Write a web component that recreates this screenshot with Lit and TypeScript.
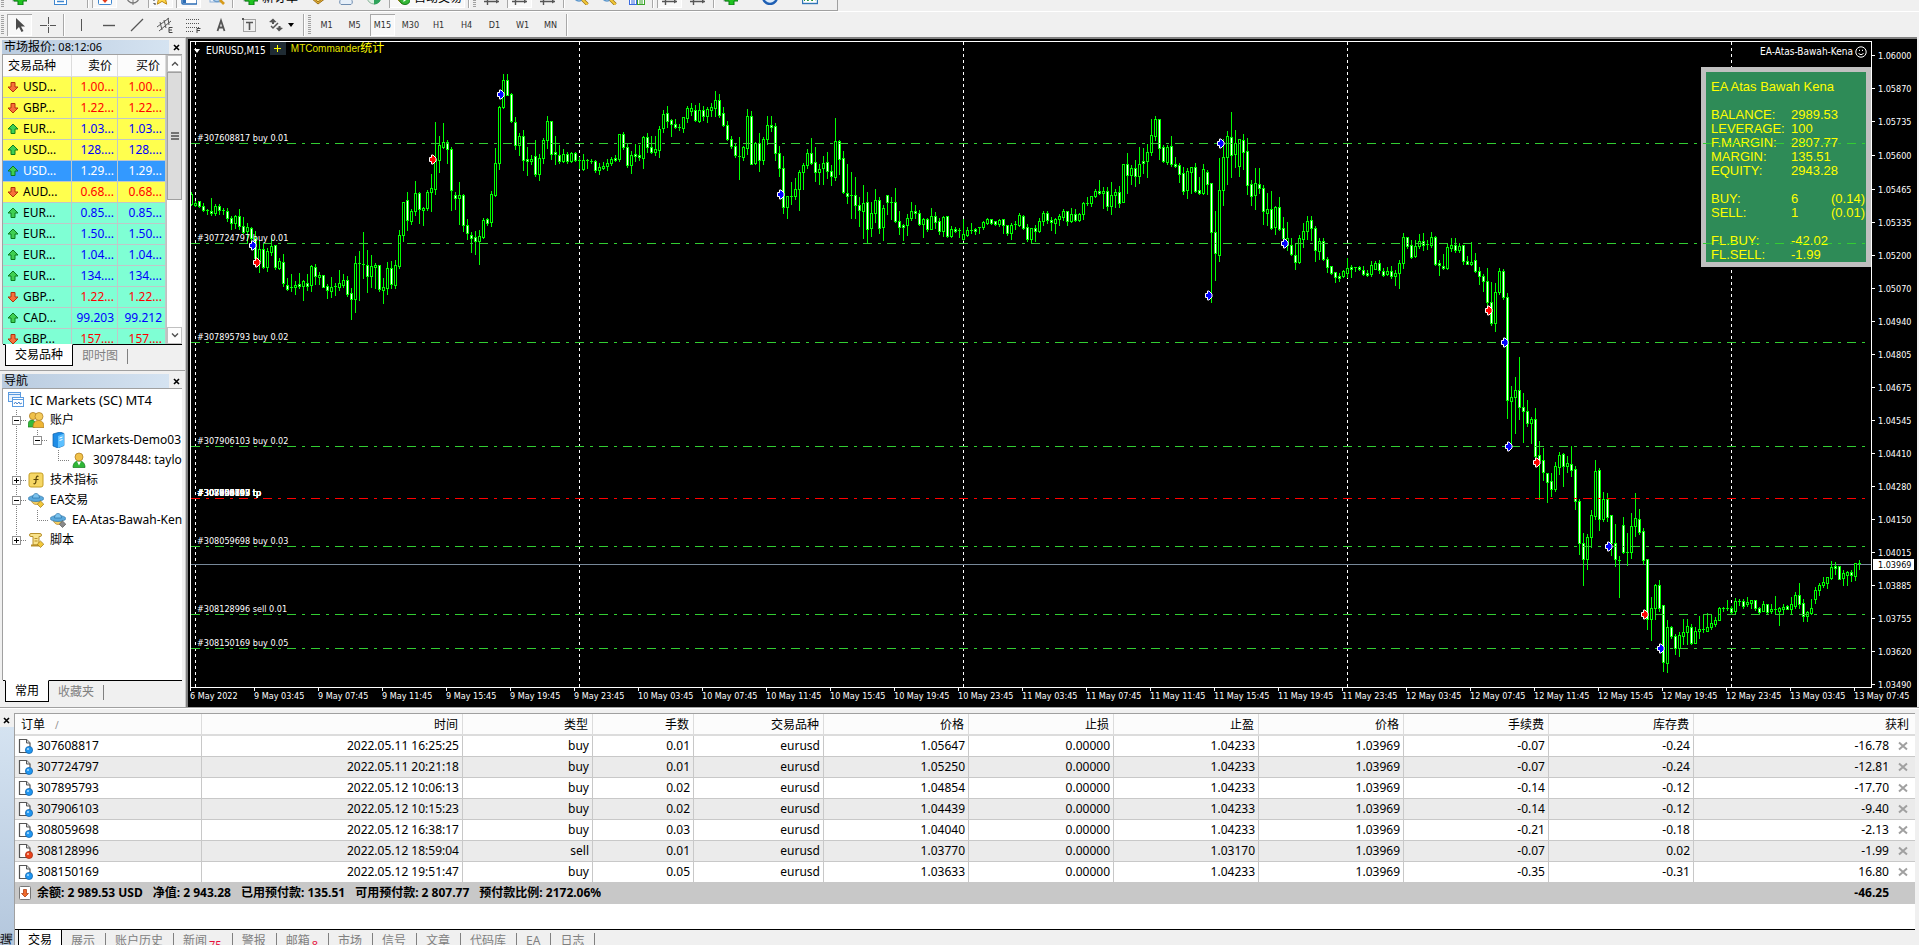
import { LitElement, html, css, svg, nothing } from "lit";
import { customElement, property } from "lit/decorators.js";
import { classMap } from "lit/directives/class-map.js";

/* ---------- icons ---------- */

const ICONS: Record<string, unknown> = {
  plus: svg`<rect x="2" y="1" width="9" height="11" fill="#fff" stroke="#9aa"/><path d="M7 4h5v4h4v4h-4v4H7v-4H3V8h4z" fill="#1fc41f" stroke="#0b7a12"/>`,
  windows: svg`<rect x="1.500" y="1.500" width="11" height="9" fill="#dceafb" stroke="#3f87d0"/><rect x="3.500" y="5.500" width="12" height="10" fill="#fff" stroke="#3f87d0"/><path d="M4 7h11M6 10h7M6 12.500h7" stroke="#3f87d0" stroke-width="1.500"/>`,
  heart: svg`<rect x="1.500" y="0.500" width="13" height="15" rx="1" fill="#fff" stroke="#3f87d0"/><path d="M8 14L4 9.500 6 8l2 1 2-1 2 1.500z" fill="#e23b1c"/>`,
  target: svg`<circle cx="8" cy="8" r="6" fill="none" stroke="#777" stroke-width="1.300"/><path d="M8 0v16M0 8h16" stroke="#777"/>`,
  star: svg`<path d="M1 2v13M1 15h3" stroke="#333" stroke-dasharray="2 2"/><path d="M9 1l2.200 5 5 .5-3.700 3.400 1.200 5.300L9 12.400l-4.700 2.800 1.200-5.300L2 6.500 7 6z" fill="#ffd84a" stroke="#c08a12"/>`,
  pane: svg`<rect x="1" y="1" width="15" height="14" rx="1" fill="#fff" stroke="#2b6cb5" stroke-width="1.500"/><path d="M2 2h3v12H2z" fill="#2b6cb5"/>`,
  lens: svg`<rect x="1" y="1" width="11" height="12" fill="#eef4fb" stroke="#8db1da"/><circle cx="8" cy="8" r="4.500" fill="#d6e9fb" stroke="#6c9dcc" stroke-width="1.400"/><path d="M11 11l4 4" stroke="#d69b1c" stroke-width="2.600"/>`,
  zoom: svg`<circle cx="6" cy="7" r="5" fill="#d6e9fb" stroke="#5d97cc" stroke-width="1.600"/><path d="M9.500 10.500l5 5" stroke="#9a7414" stroke-width="3.400"/><path d="M9.500 10.500l5 5" stroke="#f2c83a" stroke-width="2"/>`,
  book: svg`<path d="M1 9l7 6 8-6-8-7z" fill="#e9b43a" stroke="#9a6d14"/><path d="M1 7l7 6 8-6" fill="#f8d870" stroke="#9a6d14"/>`,
  cloud: svg`<circle cx="8" cy="5" r="4" fill="#d7e6f7" stroke="#7c96b4"/><path d="M3 15.500a3 3 0 010-5 5 5 0 0110 0 3 3 0 010 5z" fill="#e6eff9" stroke="#6f8db0"/>`,
  radar: svg`<circle cx="8" cy="8" r="7" fill="#dff0e4" stroke="#8bb59a"/><path d="M8 8v7.500A7 7 0 0015 8z" fill="#2fa35a"/><path d="M8 8v-6a6 6 0 00-5 9z" fill="#9ccbe8"/>`,
  auto: svg`<path d="M1 8l7 7 8-5-6-8z" fill="#f0c440" stroke="#a17a12"/><circle cx="11" cy="10" r="5.500" fill="#35b838" stroke="#14791b"/><path d="M9.500 7v6l4-3z" fill="#fff"/>`,
  bars: svg`<path d="M3.500 2v14M0 12.500h15" stroke="#555" stroke-width="1.400"/><path d="M3.500 0L1.500 3h4zM15 12.500l-3-2v4z" fill="#555"/><path d="M9.500 3v6" stroke="#149a1c" stroke-width="2"/>`,
  step: svg`<path d="M3.500 2v14M0 12.500h15" stroke="#555" stroke-width="1.400"/><path d="M15 12.500l-3-2v4z" fill="#555"/><path d="M9.500 2v8" stroke="#2b6cb5" stroke-width="1.600"/>`,
  tiles: svg`<rect x="0.500" y="1.500" width="7" height="6" fill="#cfe5ff" stroke="#3a7bd0"/><rect x="8.500" y="1.500" width="7" height="6" fill="#d9f5cf" stroke="#3ba52a"/><rect x="0.500" y="9.500" width="7" height="6" fill="#fff" stroke="#3a6be0"/><rect x="8.500" y="9.500" width="7" height="6" fill="#fff" stroke="#3ba52a"/><path d="M2 12h4M2 14h4" stroke="#3a6be0"/><path d="M10 12h4M10 14h4" stroke="#3ba52a"/>`,
  clock: svg`<circle cx="8" cy="8" r="7" fill="#dcebfa" stroke="#1e5fb4" stroke-width="2.400"/><path d="M8 3v5l3 2" stroke="#333" fill="none"/>`,
  frame: svg`<rect x="0.500" y="1.500" width="15" height="13" fill="#fff" stroke="#2f76b8" stroke-width="1.400"/><path d="M2 12l2-2 2 2 2-3 2 3 2-2 2 1" stroke="#2a9a3b" fill="none"/>`,
  cursor: svg`<path d="M4 1v12l3-3 2.500 5 2-1L9 9.500h4z" fill="#4a4a4a"/>`,
  cross: svg`<path d="M8.500 0v7M8.500 10v6M0 8.500h7M10 8.500h6M8 8.500h1" stroke="#555"/>`,
  vline: svg`<path d="M8.500 2v12" stroke="#555"/>`,
  hline: svg`<path d="M2 8.500h12" stroke="#555" stroke-width="1.400"/>`,
  trend: svg`<path d="M2 14L14 2" stroke="#555" stroke-width="1.200"/>`,
  channel: svg`<path d="M0 10L12 1M2 14L14 4M3 5l2 8M7 3l2 8M11 1l1 7" stroke="#555" fill="none"/><path d="M15.500 10.500h-3.500v5h3.500M12 13h3" stroke="#444" fill="none"/>`,
  fib: svg`<path d="M1 2.500h14M1 6.500h14M1 10.500h14M1 14.500h8" stroke="#555" stroke-dasharray="1 1"/><path d="M15.500 11.500h-3.500V16M12 13.500h3" stroke="#444" fill="none"/>`,
  textA: svg`<path d="M4.500 14L8 3.500 11.500 14M5.500 10.500h5" stroke="#555" stroke-width="1.800" fill="none"/>`,
  textT: svg`<rect x="2.500" y="2.500" width="12" height="12" fill="none" stroke="#555" stroke-dasharray="1 1"/><path d="M5 5.500h7M8.500 5.500V13" stroke="#555" stroke-width="1.600"/><rect x="1" y="1" width="2" height="2" fill="#555"/>`,
  arrows: svg`<path d="M1 5l4-3.500L8.500 5 6 5.500V7H4V5.500z" fill="#555"/><path d="M8 11l3 3.500L15 11l-2.500-.5V9h-2v1.500z" fill="#555"/><path d="M3 9l2 2 5-5" stroke="#555" stroke-width="1.500" fill="none"/>`,
  up: svg`<path d="M6 1l5 5H8v4.500H4V6H1z" fill="#3fcf52" stroke="#0c7a1e"/>`,
  down: svg`<path d="M6 11L1 6h3V1.500h4V6h3z" fill="#f7703a" stroke="#b2300c"/>`,
  terminal: svg`<rect x="0.500" y="0.500" width="12" height="9" fill="#e9f2fc" stroke="#5b9be0"/><path d="M1 2.500h11" stroke="#5b9be0"/><rect x="4.500" y="5.500" width="11" height="9" fill="#fff" stroke="#5b9be0"/><path d="M5 7.500h10" stroke="#5b9be0"/><path d="M6 12l1.500-2 1.500 2 2-2 1 2 2-1" stroke="#4a86cf" fill="none"/>`,
  people: svg`<path d="M0 15c0-5 1-7 4-7s3 2 3 7z" fill="#35b93a" stroke="#187a1e" stroke-width=".7"/><circle cx="5" cy="4" r="3.600" fill="#f0c14a" stroke="#a8761a" stroke-width=".7"/><path d="M5 15.500c0-5 2-7 5.500-7s5.500 2 5.500 7z" fill="#eeb534" stroke="#a8761a" stroke-width=".7"/><circle cx="11" cy="4.500" r="4" fill="#f4cb5c" stroke="#a8761a" stroke-width=".7"/>`,
  server: svg`<path d="M3 2l7-2 4 1.500v12L8 16l-5-2z" fill="#1f8de6" stroke="#0d5ea8" stroke-width=".7"/><path d="M8 4l6-2.500v12L8 16z" fill="#5cc0ff"/><path d="M9.500 6l3-1M9.500 8.500l3-1" stroke="#fff"/>`,
  person: svg`<path d="M2 15.500c0-4 2-6.500 6-6.500s6 2.500 6 6.500z" fill="#2fb637" stroke="#167a1d" stroke-width=".7"/><path d="M6 9.500l2 4 2-4z" fill="#fff"/><circle cx="8" cy="5" r="4" fill="#f0c14a" stroke="#a8761a" stroke-width=".7"/>`,
  fx: svg`<rect x="1" y="1" width="14" height="14" rx="2" fill="#f6d765" stroke="#c59d22"/><path d="M10.500 4.500c-2-1-2.500 1-2.500 3.500s-.5 4.500-2.500 3.500M5.500 7.500h5" stroke="#5a4408" stroke-width="1.200" fill="none"/>`,
  expert: svg`<path d="M3 8c1 3 3 4.500 5 4.500s4-1.500 5-4.500z" fill="#f2cd62" stroke="#a8761a" stroke-width=".6"/><ellipse cx="8" cy="6.500" rx="7.800" ry="3" fill="#5aa9dd" stroke="#2d74a8" stroke-width=".7"/><path d="M4.500 6c0-6 7-6 7 0z" fill="#7cc3ee" stroke="#2d74a8" stroke-width=".7"/><path d="M12.500 9l3.300 3.200-3.300 3.300-3.200-3.300z" fill="#f2c83a" stroke="#9a7414" stroke-width=".7"/>`,
  expertOff: svg`<path d="M3 8c1 3 3 4.500 5 4.500s4-1.500 5-4.500z" fill="#f2cd62" stroke="#a8761a" stroke-width=".6"/><ellipse cx="8" cy="6.500" rx="7.800" ry="3" fill="#5aa9dd" stroke="#2d74a8" stroke-width=".7"/><path d="M4.500 6c0-6 7-6 7 0z" fill="#7cc3ee" stroke="#2d74a8" stroke-width=".7"/><path d="M12.500 9l3.300 3.200-3.300 3.300-3.200-3.300z" fill="#8a8a8a" stroke="#555" stroke-width=".7"/>`,
  script: svg`<path d="M3 1.500h9a1.500 1.500 0 010 3h-1V13h-6V4.500H3a1.500 1.500 0 010-3z" fill="#f8e28a" stroke="#b8902a"/><path d="M3 13.500h8" stroke="#b8902a" stroke-width="2"/><path d="M6.500 6.500h3M6.500 9h3" stroke="#b8902a"/><path d="M12.500 9l3.300 3.200-3.300 3.300-3.200-3.300z" fill="#f2c83a" stroke="#9a7414" stroke-width=".7"/>`,
  docBuy: svg`<path d="M1.500 1.500h7l3.500 3.500v9.500h-10.500z" fill="#fff" stroke="#555" stroke-width="1.200"/><path d="M8.500 1.500V5H12" fill="#ddd" stroke="#555"/><circle cx="11" cy="12" r="3.600" fill="#2196f0" stroke="#0c5fa8" stroke-width=".7"/><circle cx="10" cy="11" r="1.100" fill="#a9dcff"/>`,
  docSell: svg`<path d="M1.500 1.500h7l3.500 3.500v9.500h-10.500z" fill="#fff" stroke="#555" stroke-width="1.200"/><path d="M8.500 1.500V5H12" fill="#ddd" stroke="#555"/><circle cx="11" cy="12" r="3.600" fill="#e8431c" stroke="#a52608" stroke-width=".7"/><circle cx="10" cy="11" r="1.100" fill="#ffc0a8"/>`,
  balance: svg`<rect x="1.500" y="1.500" width="11" height="13" rx="1" fill="#fff" stroke="#777"/><path d="M7 12L3.500 8.500h2V4.500h3v4h2z" fill="#f06a2a" stroke="#a53208" stroke-width=".7"/>`,
};

const icon = (name: string, size = 16, box = 16) =>
  html`<svg class="icon" width=${size} height=${size} viewBox="0 0 ${box} ${box}" aria-hidden="true">${ICONS[name]}</svg>`;

const baseStyles = css`
  * { box-sizing: border-box; }
  button { font: inherit; color: inherit; background: none; border: 0; padding: 0; margin: 0; cursor: default; white-space: nowrap; }
  .icon { display: block; flex: none; }
`;

/* ---------- toolbars ---------- */

type Tool = { kind?: "sep" | "grip"; icon?: string; label?: string; text?: string; on?: boolean; size?: string };

const SEP: Tool = { kind: "sep" };
const GRIP: Tool = { kind: "grip" };

const MAIN_TOOLS: Tool[] = [
  GRIP,
  { icon: "plus", label: "新图表", size: "wide" },
  { icon: "windows", label: "配置文件", size: "wide" },
  SEP,
  { icon: "heart", label: "市场报价", on: true },
  { icon: "target", label: "数据窗口" },
  { icon: "star", label: "导航", on: true },
  { icon: "pane", label: "终端", on: true },
  { icon: "lens", label: "策略测试" },
  SEP,
  { icon: "plus", text: "新订单", size: "text" },
  { icon: "book", label: "MetaEditor" },
  { icon: "cloud", label: "虚拟主机" },
  { icon: "radar", label: "信号" },
  { icon: "auto", text: "自动交易", on: true, size: "longtext" },
  SEP,
  GRIP,
  { icon: "bars", label: "柱状图" },
  { icon: "bars", label: "阴阳烛", on: true },
  { icon: "step", label: "折线图" },
  SEP,
  { icon: "zoom", label: "放大" },
  { icon: "zoom", label: "缩小" },
  { icon: "tiles", label: "平铺窗口" },
  SEP,
  { icon: "bars", label: "自动滚动", on: true },
  { icon: "step", label: "图表平移" },
  SEP,
  { icon: "plus", label: "技术指标", size: "wide" },
  { icon: "clock", label: "时间周期", size: "wide" },
  { icon: "frame", label: "模板", size: "wide" },
];

const DRAW_TOOLS: Tool[] = [
  GRIP,
  { icon: "cursor", label: "光标", on: true },
  { icon: "cross", label: "十字线" },
  SEP,
  { icon: "vline", label: "垂直线" },
  { icon: "hline", label: "水平线" },
  { icon: "trend", label: "趋势线" },
  { icon: "channel", label: "等距通道" },
  { icon: "fib", label: "斐波那契" },
  { icon: "textA", label: "文字" },
  { icon: "textT", label: "文本标签" },
  { icon: "arrows", label: "箭头", size: "caret" },
  SEP,
  GRIP,
  ...["M1", "M5", "M15", "M30", "H1", "H4", "D1", "W1", "MN"].map((t) => ({ text: t, on: t === "M15" })),
  SEP,
];

@customElement("mt-toolbar")
class MtToolbar extends LitElement {
  @property({ attribute: false }) tools: Tool[] = [];

  static styles = [
    baseStyles,
    css`
      :host { display: flex; align-items: center; gap: 3px; padding-left: 1px; font: 12px "Noto Sans", "Noto Sans CJK SC", sans-serif; }
      .grip { width: 3px; height: 20px; flex: none; background: repeating-linear-gradient(#a0a0a0 0 1px, transparent 1px 2px); }
      .sep { width: 2px; height: 22px; flex: none; border-left: 1px solid #a8a8a8; border-right: 1px solid #fff; }
      .tool { display: flex; align-items: center; justify-content: center; gap: 4px; width: 25px; height: 22px; flex: none; }
      .tool.on { background: #f8f8f8; box-shadow: inset 1px 1px #a8a8a8, inset -1px -1px #fff; }
      .tool.wide { width: 37px; justify-content: flex-start; padding-left: 4px; }
      .tool.caret { width: 36px; justify-content: flex-start; padding-left: 4px; }
      .tool.text { width: 65px; justify-content: flex-start; padding-left: 5px; }
      .tool.longtext { width: 76px; justify-content: flex-start; padding-left: 5px; }
      .period { font: 9px "DejaVu Sans Condensed", "DejaVu Sans", sans-serif; color: #303030; }
      .drop { width: 0; height: 0; border: 3px solid transparent; border-top: 4px solid #000; border-bottom: 0; }
    `,
  ];

  render() {
    return this.tools.map((t) => {
      if (t.kind) return html`<span class=${t.kind}></span>`;
      const cls = { tool: true, on: !!t.on, period: !t.icon, [t.size ?? "std"]: true };
      return html`<button class=${classMap(cls)} aria-label=${t.label ?? t.text ?? ""}>
        ${t.icon ? icon(t.icon) : nothing}${t.text ?? nothing}${t.size === "caret" ? html`<span class="drop"></span>` : nothing}
      </button>`;
    });
  }
}

/* ---------- market watch ---------- */

type Quote = [sym: string, bid: string, ask: string, up: boolean, tone: string];

const QUOTES: Quote[] = [
  ["USD...", "1.00...", "1.00...", false, "gold"],
  ["GBP...", "1.22...", "1.22...", false, "gold"],
  ["EUR...", "1.03...", "1.03...", true, "gold"],
  ["USD...", "128....", "128....", true, "gold"],
  ["USD...", "1.29...", "1.29...", true, "picked"],
  ["AUD...", "0.68...", "0.68...", false, "gold"],
  ["EUR...", "0.85...", "0.85...", true, "aqua"],
  ["EUR...", "1.50...", "1.50...", true, "aqua"],
  ["EUR...", "1.04...", "1.04...", true, "aqua"],
  ["EUR...", "134....", "134....", true, "aqua"],
  ["GBP...", "1.22...", "1.22...", false, "aqua"],
  ["CAD...", "99.203", "99.212", true, "aqua"],
  ["GBP...", "157....", "157....", false, "aqua"],
];

const panelStyles = css`
  :host { display: flex; flex-direction: column; font: 12px/16px "Noto Sans", "Noto Sans CJK SC", sans-serif; color: #000; min-height: 0; }
  .title { display: flex; align-items: center; height: 14px; margin: 2px 1px 0 2px; }
  .name { flex: 1; height: 14px; line-height: 14px; padding-left: 2px; background: linear-gradient(90deg, #b9cbdf, #d5e3f1); white-space: nowrap; }
  .clock { font-size: 11px; }
  .close { width: 15px; height: 14px; display: grid; place-items: center; }
  .tabs { display: flex; flex: none; height: 26px; margin-right: 3px; padding-left: 3px; }
  .strip { display: flex; flex: 1; border-top: 1px solid #000; padding-left: 2px; }
  .tab { height: 21px; padding: 0 9px; color: #808080; }
  .tab.on { margin-top: -1px; height: 22px; background: #fff; color: #000; border: 1px solid #000; border-top-color: #fff; }
  .rule { width: 1px; height: 15px; margin-top: 4px; background: #808080; }
`;

const closeGlyph = html`<svg width="7" height="7" viewBox="0 0 7 7"><path d="M1 1l5 5M6 1L1 6" stroke="#000" stroke-width="1.6"/></svg>`;

@customElement("mt-market")
class MtMarket extends LitElement {
  static styles = [
    baseStyles,
    panelStyles,
    css`
      .list { display: flex; flex: 1; min-height: 0; overflow: hidden; margin: 0 3px 0 2px; border-left: 1px solid #a0a0a0; border-top: 1px solid #a0a0a0; background: #fff; }
      .view { flex: 1; overflow: hidden; }
      table { width: 100%; border-collapse: separate; border-spacing: 0; table-layout: fixed; }
      th { height: 22px; padding: 0 5px; background: #fcfcfc; font-weight: 400; text-align: right; border-right: 1px solid #dcdcdc; border-bottom: 1px solid #dcdcdc; }
      th.sym { width: 69px; text-align: left; }
      th.bid { width: 46px; }
      td { height: 21px; padding: 0 3px 0 0; text-align: right; border-right: 1px solid #c0c8c8; border-bottom: 1px solid #c0c8c8; overflow: hidden; }
      .cell { display: flex; align-items: center; gap: 4px; padding-left: 4px; }
      .gold td { background: #ffff4e; }
      .aqua td { background: #7fffd4; }
      td.rise { color: #0000ff; }
      td.fall { color: #ff0000; }
      .picked td { background: #3399ff; color: #fff; }
      .bar { width: 16px; display: flex; flex-direction: column; background: #fff; border-left: 1px solid #c0c0c0; }
      .arrow { height: 17px; flex: none; display: grid; place-items: center; background: #fdfdfd; border: 1px solid #c0c0c0; }
      .thumb { flex: 0 0 128px; display: grid; place-items: center; background: #dcdcdc; border: 1px solid #a0a0a0; }
      .fill { flex: 1; }
    `,
  ];

  render() {
    return html`
      <div class="title"><span class="name">市场报价: <span class="clock">08:12:06</span></span><button class="close" aria-label="关闭">${closeGlyph}</button></div>
      <div class="list">
        <div class="view">
          <table>
            <thead><tr><th class="sym">交易品种</th><th class="bid">卖价</th><th>买价</th></tr></thead>
            <tbody>
              ${QUOTES.map(([sym, bid, ask, up, tone]) => html`<tr class=${tone}>
                <td><span class="cell">${icon(up ? "up" : "down", 12, 12)}${sym}</span></td>
                <td class=${up ? "rise" : "fall"}>${bid}</td><td class=${up ? "rise" : "fall"}>${ask}</td>
              </tr>`)}
            </tbody>
          </table>
        </div>
        <div class="bar">
          <button class="arrow" aria-label="向上"><svg width="8" height="5"><path d="M1 4.500l3-3 3 3" fill="none" stroke="#505050" stroke-width="1.400"/></svg></button>
          <div class="thumb"><svg width="8" height="8"><path d="M0 1h8M0 4h8M0 7h8" stroke="#505050" stroke-width="1.600"/></svg></div>
          <div class="fill"></div>
          <button class="arrow" aria-label="向下"><svg width="8" height="5"><path d="M1 .5l3 3 3-3" fill="none" stroke="#505050" stroke-width="1.400"/></svg></button>
        </div>
      </div>
      <div class="tabs"><div class="strip"><button class="tab on">交易品种</button><button class="tab">即时图</button><span class="rule"></span></div></div>`;
  }
}

/* ---------- navigator ---------- */

type Node = { text: string; icon: string; indent: number; guide?: string; box?: number; open?: boolean; root?: boolean };

const NODES: Node[] = [
  { text: "IC Markets (SC) MT4", icon: "terminal", indent: 5, root: true },
  { text: "账户", icon: "people", indent: 25, guide: "M13.5 0v20M18 10.500h6", box: 13, open: true },
  { text: "ICMarkets-Demo03", icon: "server", indent: 47, guide: "M13.5 0v20M34.5 0v6M39 10.500h6", box: 34, open: true },
  { text: "30978448: taylor", icon: "person", indent: 68, guide: "M13.5 0v20M55.5 0v10.500h11" },
  { text: "技术指标", icon: "fx", indent: 25, guide: "M13.5 0v20M18 10.500h6", box: 13 },
  { text: "EA交易", icon: "expert", indent: 25, guide: "M13.5 0v20M18 10.500h6", box: 13, open: true },
  { text: "EA-Atas-Bawah-Kena", icon: "expertOff", indent: 47, guide: "M13.5 0v20M34.5 0v10.500h11" },
  { text: "脚本", icon: "script", indent: 25, guide: "M13.5 0v6M18 10.500h6", box: 13 },
];

@customElement("mt-navigator")
class MtNavigator extends LitElement {
  static styles = [
    baseStyles,
    panelStyles,
    css`
      .title { margin-top: 3px; }
      .tree { flex: 1; min-height: 0; overflow: hidden; margin: 0 3px 0 2px; padding: 1px 0 0; list-style: none; background: #fff; border-left: 1px solid #a0a0a0; border-top: 1px solid #a0a0a0; }
      .node { display: flex; align-items: center; height: 20px; white-space: nowrap; }
      .root { font-size: 13px; }
      .text { padding-left: 6px; }
      .guides { display: block; flex: none; }
      .tabs { height: 27px; }
    `,
  ];

  render() {
    return html`
      <div class="title"><span class="name">导航</span><button class="close" aria-label="关闭">${closeGlyph}</button></div>
      <ul class="tree">
        ${NODES.map((n) => html`<li class=${classMap({ node: true, root: !!n.root })}>
          <svg class="guides" width=${n.indent} height="20" shape-rendering="crispEdges">
            <path d=${n.guide ?? ""} fill="none" stroke="#808080" stroke-dasharray="1 1"/>
            ${n.box === undefined ? nothing : svg`<rect x=${n.box - 3.5} y="6.500" width="8" height="8" fill="#fff" stroke="#909090"/>
              <path d=${`M${n.box - 2} 10.500h5${n.open ? "" : `M${n.box + 0.5} 8v5`}`} stroke="#000"/>`}
          </svg>
          ${icon(n.icon)}<span class="text">${n.text}</span>
        </li>`)}
      </ul>
      <div class="tabs"><div class="strip"><button class="tab on">常用</button><button class="tab">收藏夹</button><span class="rule"></span></div></div>`;
  }
}

/* ---------- chart ---------- */

/* Each bar: direction, then high, body top, body bottom, low as pixel rows. */
const BARS = `
+162 164 174 175|+171 173 175 176|-171 171 176 177|-173 176 180 181|-179 180 181 184|-168 181 183 185|+174 176 183 185|-174 176 180 184|-178 180 181 184|-178 181 188 191
-186 188 193 199|+185 186 193 198|-179 186 196 199|-187 196 202 203|+193 197 201 213|-197 198 208 212|-201 208 228 230|+210 219 231 242|-213 219 237 238|+218 221 237 241
+208 216 222 225|-215 215 237 239|+228 231 238 239|-224 232 253 256|-248 255 259 260|-244 257 258 261|+251 255 257 264|-243 254 256 258|+250 251 256 270|-244 253 256 260
+235 236 255 261|-234 237 246 254|+242 245 247 254|-245 245 257 257|-254 256 260 268|+247 257 261 267|-253 256 257 265|+240 253 257 260|+244 250 255 257|-246 250 264 266
-258 263 269 289|+226 233 269 282|-221 233 234 270|-202 234 235 248|-220 235 246 262|+225 236 246 257|+233 235 237 258|-235 235 259 261|+248 257 260 273|+232 238 258 264
-231 238 254 258|+230 235 255 258|+200 205 236 238|+172 172 205 211|-162 170 190 200|+179 181 191 194|+151 163 181 185|-162 163 179 193|+177 178 180 195|+160 162 178 180
+144 158 162 181|+92 129 159 164|+106 115 130 142|+93 112 117 118|-110 112 119 133|-117 119 160 180|-162 165 168 179|+152 165 168 194|-164 165 195 201|-189 195 203 209
-202 205 208 222|-201 207 211 224|+200 206 211 234|+188 190 207 208|-188 189 193 195|+161 164 192 196|+118 133 165 166|+76 77 133 139|+44 50 77 78|-44 50 65 65
-63 64 91 92|-87 92 115 119|+103 106 115 125|-100 106 130 140|-117 129 131 145|+125 129 131 134|-110 126 144 146|+124 128 144 150|+108 110 128 133|+86 91 110 118
-91 91 124 129|-106 122 124 134|-115 125 131 133|+119 124 131 132|-122 124 131 133|+122 123 131 132|-122 123 130 131|-127 130 131 138|+124 130 139 140|-129 130 131 138
-129 131 132 133|-130 131 140 142|+133 137 140 144|+132 136 138 139|+129 133 136 140|+127 129 133 135|-125 128 130 131|+104 104 129 131|-102 104 117 119|-114 117 135 137
+121 125 135 143|-114 124 126 131|-115 125 127 130|+106 107 128 138|-103 107 117 122|-106 117 122 123|+106 119 122 125|+96 99 120 127|+80 84 98 102|-76 83 91 97
-89 90 94 106|-89 94 97 98|-94 97 98 100|+87 87 98 102|+76 78 88 92|+73 78 81 85|-75 80 90 91|+73 80 91 92|-76 80 86 90|+77 79 86 92
+73 77 80 86|+61 70 78 86|-64 70 85 87|-77 83 95 96|-91 95 109 110|-106 109 116 118|-114 116 125 127|-107 126 127 149|+116 117 127 130|+79 86 118 124
-81 86 134 134|+112 113 133 134|-103 113 130 141|+107 109 130 134|+86 95 109 114|-86 95 97 101|-93 96 123 130|-116 123 138 146|-126 138 177 183|+166 166 177 188
-152 166 167 174|+148 159 166 169|+140 142 159 180|+133 135 142 159|+119 123 135 138|-108 123 133 134|-117 132 142 151|+134 139 142 154|+126 133 138 154|-122 132 141 148
-135 141 146 155|+88 111 147 150|-110 111 129 144|-121 128 162 163|-134 163 166 173|-142 165 166 188|-147 165 175 188|-167 175 180 196|+155 173 181 208|-162 172 199 213
+172 183 198 206|+159 170 183 192|-167 170 198 203|+175 178 197 210|-165 165 172 184|-167 172 173 189|-158 172 191 192|-181 191 197 204|-194 195 197 210|+184 188 195 205
+172 181 188 190|-175 181 183 188|-180 183 194 195|+188 189 194 207|-188 189 199 201|+178 186 199 199|-182 186 192 198|-188 191 201 204|+186 187 201 206|-186 186 206 207
+196 199 206 207|-197 199 201 202|-198 200 201 207|+189 204 209 210|+197 200 205 206|-193 200 201 203|-198 199 201 204|-197 197 198 203|+191 192 197 199|+188 189 193 194
-189 189 193 194|-191 191 194 195|+189 190 194 196|-189 189 195 203|-195 195 203 205|+193 195 203 209|-191 194 195 199|+183 185 195 196|-185 186 198 199|-194 197 209 211
+198 198 209 212|-195 198 201 211|+188 191 201 202|+181 183 191 195|-181 183 190 193|-187 190 192 200|+188 189 193 203|+184 186 189 195|+179 181 187 190|-181 181 191 195
+178 184 191 192|-179 184 190 191|+183 184 190 191|+172 173 184 189|-167 173 174 175|+166 166 173 176|+159 161 166 167|-150 161 163 164|+157 161 163 178|-157 161 176 180
+152 165 176 184|+159 162 165 177|-156 162 173 177|+134 134 172 172|-123 134 145 163|+135 138 145 154|-130 138 146 156|+117 134 146 153|-118 131 133 143|+114 122 131 147
+89 105 122 125|+86 89 106 110|-89 89 118 129|-115 117 131 132|+115 117 132 134|-106 116 134 136|-127 134 136 137|-133 135 144 152|-137 143 161 164|+138 141 160 168
+137 137 142 163|-133 137 161 162|-147 160 163 164|+134 139 163 164|-140 142 154 164|-153 153 202 272|-181 202 223 250|+128 160 225 231|+109 127 160 175|+101 106 127 154
-82 107 125 147|+100 113 124 137|+109 109 136 146|-104 110 122 139|-108 121 155 164|-150 154 166 175|+138 153 165 179|-138 154 158 163|-155 158 181 194|+163 179 183 195
-161 179 198 199|+176 177 197 204|-167 177 199 200|-187 198 208 211|+192 208 215 220|-208 215 224 225|-213 225 232 239|+205 208 232 233|+193 201 209 217|+186 191 201 209
-186 190 198 210|-196 198 220 231|+208 211 221 229|-208 211 229 230|-227 229 237 242|-236 236 243 244|-242 242 247 252|-243 246 248 251|+240 241 246 247|+228 238 243 247
-235 237 239 247|-237 237 238 241|-236 237 239 240|-236 240 244 245|-240 243 245 246|+231 235 244 246|+231 233 239 239|-230 233 240 243|-238 241 245 246|+237 241 244 245
-236 241 246 248|+240 243 246 255|+230 233 243 258|+203 207 233 238|-207 207 216 218|-210 215 227 228|+210 216 226 227|+204 211 216 218|-203 211 215 220|-210 214 215 219
+202 207 215 217|-206 207 234 235|-230 233 235 245|-224 236 238 239|+214 217 238 239|+208 215 218 221|-208 215 220 222|+213 216 220 222|-215 215 231 234|-226 231 234 234
+212 232 234 235|-223 230 241 242|-237 241 246 254|-244 246 251 261|-238 251 272 277|-252 272 293 295|+253 262 293 301|+238 241 262 264|-239 241 267 269|-263 267 370 388
+356 367 371 415|+347 360 367 403|-327 360 377 389|-363 377 381 412|-370 381 393 396|+387 389 393 413|-378 389 426 427|-411 425 430 469|-418 430 442 450|-443 443 452 472
-443 451 459 466|+432 436 459 461|+422 425 437 444|-423 424 436 456|+426 433 436 442|-416 434 440 446|-436 439 471 479|-469 471 513 524|-503 513 529 555|+504 507 529 539
+480 485 507 517|+430 441 486 489|-438 440 489 500|+462 469 489 491|-463 469 487 491|-485 485 513 525|-494 513 529 536|-526 530 531 567|-487 495 522 523|-503 522 523 535
+483 496 522 528|+463 488 496 506|-479 489 502 504|-498 501 530 534|-529 529 589 599|+567 578 589 610|+554 555 578 589|-550 555 578 581|-575 575 632 641|+590 597 633 642
-596 597 606 608|-604 606 618 624|+602 605 618 626|+589 602 606 614|+589 596 602 614|-594 597 613 614|+597 601 613 613|+586 599 601 608|-584 599 600 602|+583 597 601 601
+584 593 597 599|+587 590 594 596|+577 578 590 590|-577 578 579 581|-570 578 579 580|-576 578 582 584|+568 571 581 583|-569 571 572 575|-569 571 576 578|+567 572 574 576
+570 570 573 578|-570 570 578 580|-577 578 582 583|+571 574 581 581|-574 574 582 583|+574 579 581 583|-566 579 580 583|+577 578 581 595|+574 577 579 584|-575 576 579 579
+567 574 579 584|+562 565 576 578|-553 565 574 578|-569 573 586 591|+581 582 586 591|+569 578 583 584|+557 560 569 573|+553 555 560 565|+547 552 555 557|+547 547 553 558
+531 537 548 549|-532 536 538 544|-536 536 549 549|+540 543 548 555|+541 542 545 555|-540 542 545 551|+533 533 546 550|-530 533 534 539`
  .trim()
  .split(/[|\n]/)
  .map((s) => ({ up: s[0] === "+", v: s.slice(1).split(" ").map((n) => Number(n) - 12) }));

const BAR_STEP = 4;
const box = (x: number, y: number, w: number, h: number) => `M${x} ${y}h${w}v${h}h${-w}z`;

const candlePaths = (() => {
  let lime = "";
  let black = "";
  let white = "";
  BARS.forEach(({ up, v: [high, top, bottom, low] }, i) => {
    const x = i * BAR_STEP;
    const tall = bottom - top;
    lime += box(x, high, 1, low - high + 1);
    lime += box(x - 1, top, 3, tall <= 1 ? 1 : tall + 1);
    if (tall > 1) {
      if (up) black += box(x, top + 1, 1, tall - 1);
      else white += box(x, top + 1, 1, tall - 1);
    }
  });
  return { lime, black, white };
})();

const priceRow = (p: number) => Math.round(((1.06 - p) / 0.0251) * 629) + 13;

const SCALE = ["1.06000", "1.05870", "1.05735", "1.05600", "1.05465", "1.05335", "1.05200", "1.05070", "1.04940", "1.04805", "1.04675", "1.04545", "1.04410", "1.04280", "1.04150", "1.04015", "1.03885", "1.03755", "1.03620", "1.03490"];

const TIMES = ["6 May 2022"];
for (let day = 9; day <= 13; day++)
  for (const t of ["03:45", "07:45", "11:45", "15:45", "19:45", "23:45"]) if (TIMES.length < 27) TIMES.push(`${day} May ${t}`);

type Order = [id: string, time: string, type: string, lots: string, open: string, tp: string, fee: string, swap: string, profit: string];

const ORDERS: Order[] = [
  ["307608817", "2022.05.11 16:25:25", "buy", "0.01", "1.05647", "1.04233", "-0.07", "-0.24", "-16.78"],
  ["307724797", "2022.05.11 20:21:18", "buy", "0.01", "1.05250", "1.04233", "-0.07", "-0.24", "-12.81"],
  ["307895793", "2022.05.12 10:06:13", "buy", "0.02", "1.04854", "1.04233", "-0.14", "-0.12", "-17.70"],
  ["307906103", "2022.05.12 10:15:23", "buy", "0.02", "1.04439", "1.04233", "-0.14", "-0.12", "-9.40"],
  ["308059698", "2022.05.12 16:38:17", "buy", "0.03", "1.04040", "1.04233", "-0.21", "-0.18", "-2.13"],
  ["308128996", "2022.05.12 18:59:04", "sell", "0.01", "1.03770", "1.03170", "-0.07", "0.02", "-1.99"],
  ["308150169", "2022.05.12 19:51:47", "buy", "0.05", "1.03633", "1.04233", "-0.35", "-0.31", "16.80"],
];

const MARKERS: [x: number, y: number, fill: string][] = [
  [61, 203, "#0000ff"], [65, 220, "#ff0000"], [241, 117, "#ff0000"], [309, 52, "#0000ff"],
  [589, 152, "#0000ff"], [1017, 253, "#0000ff"], [1029, 101, "#0000ff"], [1093, 201, "#0000ff"],
  [1297, 268, "#ff0000"], [1313, 300, "#0000ff"], [1317, 404, "#0000ff"], [1345, 420, "#ff0000"],
  [1417, 504, "#0000ff"], [1453, 572, "#ff0000"], [1469, 606, "#0000ff"],
];

const ACCOUNT: [string, string, string][] = [
  ["BALANCE:", "2989.53", ""], ["LEVERAGE:", "100", ""], ["F.MARGIN:", "2807.77", ""], ["MARGIN:", "135.51", ""], ["EQUITY:", "2943.28", ""],
  ["", "", ""], ["BUY:", "6", "(0.14)"], ["SELL:", "1", "(0.01)"], ["", "", ""], ["FL.BUY:", "-42.02", ""], ["FL.SELL:", "-1.99", ""],
];

@customElement("mt-chart")
class MtChart extends LitElement {
  static styles = [
    baseStyles,
    css`
      :host { display: grid; grid-template: minmax(0, 1fr) 19px / minmax(0, 1fr) 45px; padding: 2px 0 0 2px; background: #000; color: #fff; font: 9px/12px "DejaVu Sans Condensed", "DejaVu Sans", sans-serif; border-left: 2px solid #808080; border-top: 2px solid #808080; overflow: hidden; }
      .plot { position: relative; border: 1px solid #fff; overflow: hidden; }
      .layer { position: absolute; inset: 0; width: 100%; height: 100%; }
      .head { position: absolute; left: 3px; top: 0; display: flex; align-items: flex-start; }
      .fold { width: 0; height: 0; border: 3px solid transparent; border-top: 4px solid #fff; border-bottom: 0; margin: 7px 6px 0 0; }
      .pair { margin-top: 3px; font-size: 10px; }
      .add { width: 16px; height: 13px; margin-left: 4px; background: #1f2b33; color: #ffff00; display: grid; place-items: center; }
      .stats { margin-left: 5px; color: #e8e800; font: 10px/12px "Liberation Sans", "Noto Sans CJK SC", sans-serif; }
      .stats b { font-weight: 400; font-size: 12px; color: #ffff00; }
      .advisor { position: absolute; right: 4px; top: 3px; display: flex; align-items: center; gap: 2px; font-size: 10px; line-height: 14px; }
      .card { position: absolute; right: 0; top: 25px; width: 170px; border: 5px solid #c0c0c0; background: #2e8b57; color: #ffff00; font: 13px/14px "Liberation Sans", sans-serif; padding: 8px 0 0 5px; }
      .card h2 { font: inherit; margin: 0 0 14px; }
      .line { display: grid; grid-template-columns: 80px 40px 1fr; height: 14px; white-space: nowrap; }
      .scale { width: 100%; height: 100%; overflow: visible; }
      .times { grid-column: 1 / -1; display: flex; white-space: nowrap; overflow: hidden; }
      .time { width: 64px; flex: none; padding-top: 2px; background: linear-gradient(#fff, #fff) 0 0 / 1px 3px no-repeat; }
      text { fill: #fff; }
      .now { fill: #000; }
    `,
  ];

  render() {
    return html`
      <div class="plot">
        <svg class="layer" shape-rendering="crispEdges">
          ${[4, 388, 772, 1156, 1540].map((x) => svg`<line x1=${x + 0.5} x2=${x + 0.5} y1="0" y2="100%" stroke="#fff" stroke-dasharray="3 3"/>`)}
          <line x1="0" x2="100%" y1=${priceRow(1.03969) + 0.5} y2=${priceRow(1.03969) + 0.5} stroke="#778899"/>
          <path d=${candlePaths.lime} fill="#00ff00"/>
          <path d=${candlePaths.black} fill="#000"/>
          <path d=${candlePaths.white} fill="#fff"/>
        </svg>
        <section class="card">
          <h2>EA Atas Bawah Kena</h2>
          ${ACCOUNT.map(([k, v, n]) => html`<div class="line"><span>${k}</span><span>${v}</span><span>${n}</span></div>`)}
        </section>
        <svg class="layer">
          ${ORDERS.map(([id, , type, lots, open]) => {
            const y = priceRow(Number(open));
            return svg`<line x1="0" x2="100%" y1=${y + 0.5} y2=${y + 0.5} stroke="#32cd32" stroke-dasharray="9 6 3 6" shape-rendering="crispEdges"/>
              <text x="6" y=${y - 2}>#${id} ${type} ${lots}</text>`;
          })}
          <line x1="0" x2="100%" y1=${priceRow(1.04233) + 0.5} y2=${priceRow(1.04233) + 0.5} stroke="#ff0000" stroke-dasharray="9 6 3 6" shape-rendering="crispEdges"/>
          ${ORDERS.filter((o) => o[5] === "1.04233").map((o) => svg`<text x="6" y=${priceRow(1.04233) - 2}>#${o[0]} tp</text>`)}
          ${MARKERS.map(([x, y, fill]) => svg`<path d=${`M${x - 2.5} ${y - 1.5}h2v-2.500h1.500l3 3v3l-3 3h-1.500v-2.500h-2z`} fill=${fill} stroke="#fff"/>`)}
        </svg>
        <div class="head">
          <span class="fold"></span><span class="pair">EURUSD,M15</span>
          <button class="add" aria-label="添加"><svg width="7" height="7"><path d="M3.500 0v7M0 3.500h7" stroke="#ffff00"/></svg></button>
          <span class="stats">MTCommander<b>统计</b></span>
        </div>
        <div class="advisor">EA-Atas-Bawah-Kena
          <svg width="12" height="12" viewBox="0 0 12 12" fill="none" stroke="#fff"><circle cx="6" cy="6" r="5.200"/><path d="M3.500 7.500q2.500 2.500 5 0M4.500 3.800v1.200M7.500 3.800v1.200"/></svg>
        </div>
      </div>
      <svg class="scale">
        ${SCALE.map((p) => {
          const y = priceRow(Number(p)) + 1;
          return svg`<path d=${`M0 ${y + 0.5}h3`} stroke="#fff" shape-rendering="crispEdges"/><text x="6" y=${y + 4}>${p}</text>`;
        })}
        <rect x="1" y=${priceRow(1.03969) - 4} width="41" height="11" fill="#fff"/>
        <text class="now" x="6" y=${priceRow(1.03969) + 5}>1.03969</text>
      </svg>
      <div class="times">${TIMES.map((t) => html`<span class="time">${t}</span>`)}</div>`;
  }
}

/* ---------- terminal ---------- */

const SUMS = ["余额: 2 989.53 USD", "净值: 2 943.28", "已用预付款: 135.51", "可用预付款: 2 807.77", "预付款比例: 2172.06%"];

const FOOT: [string, string?][] = [["展示"], ["账户历史"], ["新闻", "75"], ["警报"], ["邮箱", "8"], ["市场"], ["信号"], ["文章"], ["代码库"], ["EA"], ["日志"]];

@customElement("mt-terminal")
class MtTerminal extends LitElement {
  static styles = [
    baseStyles,
    css`
      :host { display: flex; padding-right: 4px; font: 12px/16px "Noto Sans", "Noto Sans CJK SC", sans-serif; color: #000; overflow: hidden; }
      .side { width: 14px; flex: none; display: flex; flex-direction: column; }
      .close { height: 14px; width: 12px; display: grid; place-items: center; }
      .spine { flex: 1; display: flex; align-items: flex-end; overflow: hidden; background: linear-gradient(#d5e3f1, #b4c7dd); }
      .label { height: 18px; width: 14px; line-height: 14px; writing-mode: vertical-rl; text-orientation: sideways; overflow: hidden; }
      .label span { display: block; transform: rotate(180deg); }
      .body { flex: 1; min-width: 0; background: #fff; border-left: 1px solid #a0a0a0; border-top: 1px solid #a0a0a0; }
      table { width: 100%; table-layout: fixed; border-collapse: separate; border-spacing: 0; }
      th { height: 22px; padding: 1px 4px 0; font-weight: 400; text-align: right; background: #fcfcfc; border-right: 1px solid #dcdcdc; border-bottom: 2px solid #dcdcdc; }
      th:first-child { text-align: left; padding-left: 6px; }
      th:last-child { border-right: 0; padding-right: 6px; }
      .c1 { width: 187px; } .c2 { width: 261px; } .c3 { width: 130px; } .c4 { width: 101px; } .c5 { width: 130px; } .cn { width: 145px; }
      .mark { color: #909090; padding-left: 10px; font-size: 10px; }
      td { height: 21px; padding: 0 3px 0 0; text-align: right; border-right: 1px solid #c8c8c8; border-bottom: 1px solid #c8c8c8; white-space: nowrap; }
      td:last-child { border-right: 0; }
      tbody tr:nth-child(even) td { background: #ebebeb; }
      .ticket { display: flex; align-items: center; gap: 3px; padding-left: 3px; }
      .gain { display: flex; align-items: center; justify-content: flex-end; gap: 8px; padding-right: 3px; }
      .x { width: 12px; height: 12px; display: grid; place-items: center; }
      tfoot td { background: #c8c8c8; font-weight: 700; border-color: #c8c8c8; }
      .sums { display: flex; align-items: center; padding-left: 3px; }
      .sum { padding: 0 7px 0 3px; }
      td.total { padding-right: 26px; }
      .foot { height: 41px; padding-top: 25px; }
      .strip { display: flex; height: 16px; overflow: hidden; border-top: 1px solid #000; background: #f0f0f0; padding-left: 3px; }
      .tab { height: 20px; padding: 1px 10px 0 9px; color: #808080; flex: none; }
      .tab.on { height: 21px; margin-top: -1px; background: #fff; color: #000; border: 1px solid #000; border-top-color: #fff; padding: 1px 9px 0; }
      .rule { width: 1px; height: 14px; margin-top: 3px; background: #808080; flex: none; }
      .count { margin-left: 2px; color: #e8103c; font-size: 11px; line-height: 0; vertical-align: -4px; }
    `,
  ];

  render() {
    return html`
      <div class="side">
        <button class="close" aria-label="关闭">${closeGlyph}</button>
        <div class="spine"><div class="label"><span>终端</span></div></div>
      </div>
      <div class="body">
        <table>
          <thead><tr>
            <th class="c1">订单<span class="mark">/</span></th><th class="c2">时间</th><th class="c3">类型</th><th class="c4">手数</th><th class="c5">交易品种</th>
            <th class="cn">价格</th><th class="cn">止损</th><th class="cn">止盈</th><th class="cn">价格</th><th class="cn">手续费</th><th class="cn">库存费</th><th>获利</th>
          </tr></thead>
          <tbody>
            ${ORDERS.map(([id, time, type, lots, open, tp, fee, swap, profit]) => html`<tr>
              <td><span class="ticket">${icon(type === "buy" ? "docBuy" : "docSell")}${id}</span></td>
              <td>${time}</td><td>${type}</td><td>${lots}</td><td>eurusd</td><td>${open}</td><td>0.00000</td><td>${tp}</td><td>1.03969</td><td>${fee}</td><td>${swap}</td>
              <td><span class="gain">${profit}<button class="x" aria-label="平仓 ${id}"><svg width="10" height="10" viewBox="0 0 10 10"><path d="M1 1.500l8 7M9 1.500L1 8.500" stroke="#a0a0a0" stroke-width="2"/></svg></button></span></td>
            </tr>`)}
          </tbody>
          <tfoot><tr>
            <td colspan="11"><span class="sums">${icon("balance")}${SUMS.map((s) => html`<span class="sum">${s}</span>`)}</span></td>
            <td class="total">-46.25</td>
          </tr></tfoot>
        </table>
        <div class="foot"><div class="strip">
          <button class="tab on">交易</button>
          ${FOOT.map(([name, n]) => html`<button class="tab">${name}${n ? html`<span class="count">${n}</span>` : nothing}</button><span class="rule"></span>`)}
        </div></div>
      </div>`;
  }
}

/* ---------- shell ---------- */

@customElement("app-root")
class AppRoot extends LitElement {
  static styles = [
    baseStyles,
    css`
      :host { display: flex; flex-direction: column; height: 100vh; overflow: hidden; background: #f0f0f0; }
      .top { display: flex; height: 12px; flex: none; border-bottom: 1px solid #fff; }
      .main-tools { height: 11px; align-items: flex-end; overflow: hidden; padding: 0 2px 2px 1px; border-bottom: 1px solid #a0a0a0; border-right: 1px solid #a0a0a0; }
      .draw-tools { height: 25px; flex: none; }
      .work { flex: 1; min-height: 0; display: grid; grid-template-columns: 186px minmax(0, 1fr); padding-right: 2px; border-bottom: 1px solid #a0a0a0; }
      .side { display: flex; flex-direction: column; min-height: 0; border-top: 1px solid #a0a0a0; border-right: 1px solid #c8c8c8; }
      .market { flex: 0 0 332px; }
      .navigator { flex: 1; border-top: 1px solid #a0a0a0; }
      .terminal { flex: none; padding-top: 4px; border-top: 1px solid #fff; }
    `,
  ];

  render() {
    return html`
      <header class="top"><mt-toolbar class="main-tools" .tools=${MAIN_TOOLS}></mt-toolbar></header>
      <mt-toolbar class="draw-tools" .tools=${DRAW_TOOLS}></mt-toolbar>
      <main class="work">
        <div class="side"><mt-market class="market"></mt-market><mt-navigator class="navigator"></mt-navigator></div>
        <mt-chart></mt-chart>
      </main>
      <mt-terminal class="terminal"></mt-terminal>`;
  }
}
